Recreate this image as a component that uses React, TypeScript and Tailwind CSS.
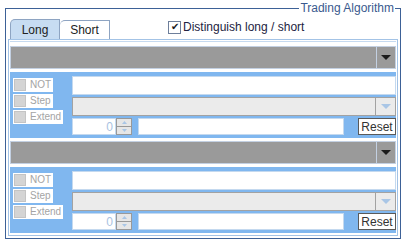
import React from "react";

function DownArrow({ color, w = 10, h = 5 }: { color: string; w?: number; h?: number }) {
  return (
    <svg width={w} height={h} viewBox={`0 0 ${w} ${h}`}>
      <polygon points={`0,0 ${w},0 ${w / 2},${h}`} fill={color} />
    </svg>
  );
}

function LabelBox({ label }: { label: string }) {
  return (
    <div className="flex h-[14px] items-center bg-white pl-[1px] pr-[2px]">
      <div className="h-[12px] w-[12px] border border-[#c4c4c4] bg-[#d4d4d4]" />
      <span className="ml-[4px] text-[10px] leading-[12px] text-[#a4a4a4]">{label}</span>
    </div>
  );
}

function ConditionGroup() {
  return (
    <div>
      {/* indicator combo, disabled look */}
      <div className="flex h-[23px] border border-[#c3d0e2] bg-[#9a9a9a]">
        <div className="flex-1" />
        <div className="flex w-[19px] items-center justify-center border-l border-[#c3d0e2]">
          <DownArrow color="#1c1c1c" />
        </div>
      </div>

      <div className="mt-[3px] flex h-[66px] bg-[#80b7ef]">
        <div className="flex w-[62px] flex-col items-start gap-[2px] pl-[3px] pt-[6px]">
          <LabelBox label="NOT" />
          <LabelBox label="Step" />
          <LabelBox label="Extend" />
        </div>

        <div className="flex w-[324px] flex-col gap-[2px] pt-[4px]">
          <div className="h-[19px] border border-[#c4d9ef] bg-white" />
          <div className="flex h-[19px]">
            <div className="flex-1 border border-[#a2a2a2] bg-[#ebebeb]" />
            <div className="flex w-[20px] items-center justify-center border border-l-0 border-[#a2a2a2] bg-[#ebebeb]">
              <DownArrow color="#a9c6e6" />
            </div>
          </div>
          <div className="flex h-[17px] items-stretch">
            <div className="flex w-[44px] items-center justify-end border border-[#c4d9ef] bg-white pr-[2px] text-[12px] text-[#a9c3e2]">
              0
            </div>
            <div className="flex w-[16px] flex-col border border-[#999999] bg-[#e6e6e6]">
              <div className="flex flex-1 items-center justify-center border-b border-[#999999]">
                <svg width="5" height="3" viewBox="0 0 5 3">
                  <polygon points="0,3 5,3 2.5,0" fill="#a9c6e6" />
                </svg>
              </div>
              <div className="flex flex-1 items-center justify-center">
                <DownArrow color="#a9c6e6" w={5} h={3} />
              </div>
            </div>
            <div className="ml-[6px] w-[206px] border border-[#c4d9ef] bg-white" />
            <div className="ml-auto flex w-[38px] items-center justify-center border border-[#5a5a5a] bg-white text-[12px] leading-none text-[#333333]">
              Reset
            </div>
          </div>
        </div>
      </div>
    </div>
  );
}

export default function App() {
  return (
    <div className="h-[241px] w-[407px] bg-white pl-[5px] pt-[8px] font-['Liberation_Sans',Arial,sans-serif]">
      <div className="relative flex h-[231px] w-[396px] flex-col border border-[#3d6197]">
        <span className="absolute right-[5px] top-[-8px] bg-white px-[1px] text-[12px] leading-[14px] text-[#3a5a8e]">
          Trading Algorithm
        </span>

        {/* tabs + option */}
        <div className="flex h-[30px] items-end pl-[4px]">
          <div className="flex h-[20px] w-[50px] items-center justify-center rounded-tl-[5px] border border-b-0 border-[#8ea4c2] bg-[#c7dcf2] text-[12px] text-[#222222]">
            Long
          </div>
          <div className="flex h-[19px] w-[50px] items-center justify-center rounded-tl-[5px] border border-b-0 border-l-0 border-[#8ea4c2] bg-white text-[12px] text-[#222222]">
            Short
          </div>
          <div className="mb-[5px] ml-[58px] flex items-center">
            <div className="flex h-[13px] w-[13px] items-center justify-center border border-[#6e7f9b] bg-white text-[10px] leading-none text-[#1a1a1a]">
              ✔
            </div>
            <span className="ml-[2px] text-[12px] leading-[14px] text-[#232341]">Distinguish long / short</span>
          </div>
        </div>

        {/* tab content */}
        <div className="mx-[2px] flex h-[197px] flex-col border border-[#a3c3e6] bg-white px-[1px]">
          <div className="mt-[1px] h-px bg-[#c6daf0]" />
          <div className="mt-[4px] flex flex-col gap-[3px]">
            <ConditionGroup />
            <ConditionGroup />
          </div>
        </div>
      </div>
    </div>
  );
}
